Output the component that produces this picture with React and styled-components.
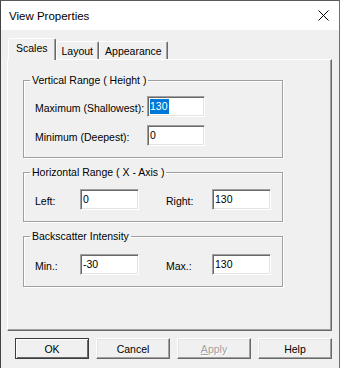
import React from 'react'
import styled, { createGlobalStyle } from 'styled-components'

const GlobalStyle = createGlobalStyle`
  html, body {
    margin: 0;
    padding: 0;
    background: #f0f0f0;
  }
  body {
    font-family: "Liberation Sans", Arial, sans-serif;
    font-size: 10.5px;
    color: #000;
  }
`;

const Window = styled.div`
  width: 340px;
  height: 368px;
  box-sizing: border-box;
  display: flex;
  flex-direction: column;
  background: #f0f0f0;
  border-left: 1px solid #434343;
  border-right: 1px solid #6e6e6e;
  border-top: 1px solid #5a5a5a;
  overflow: hidden;
`;

const TitleBar = styled.div`
  height: 29px;
  flex: none;
  display: flex;
  align-items: center;
  justify-content: space-between;
  background: #fff;
  padding: 0 10px 0 8px;
`;

const Title = styled.span`
  font-size: 11.5px;
  color: #000;
`;

const Body = styled.div`
  flex: 1;
  display: flex;
  flex-direction: column;
  padding: 8px 7px 0 6px;
`;

const TabStrip = styled.div`
  height: 21px;
  display: flex;
  align-items: flex-end;
  padding-left: 1px;
`;

const Tab = styled.div`
  position: relative;
  box-sizing: border-box;
  height: ${({ $active }) => ($active ? '22px' : '18px')};
  margin-bottom: ${({ $active }) => ($active ? '-1px' : '0')};
  z-index: ${({ $active }) => ($active ? 1 : 0)};
  padding: ${({ $active }) => ($active ? '2px 7px 0' : '2px 5px 0')};
  background: #f0f0f0;
  border-top: 1px solid #fff;
  border-left: 1px solid #fff;
  border-right: 1px solid #696969;
  box-shadow: inset -1px 0 0 #a0a0a0;
  border-radius: 2px 2px 0 0;
  line-height: 14px;
  white-space: nowrap;
`;

const Panel = styled.div`
  box-sizing: border-box;
  width: 325px;
  height: 272px;
  border-top: 1px solid #fff;
  border-left: 1px solid #fff;
  border-right: 1px solid #696969;
  border-bottom: 1px solid #696969;
  box-shadow: inset -1px -1px 0 #a0a0a0;
  padding: 14px 0 0 15px;
  display: flex;
  flex-direction: column;
  gap: 8px;
`;

const Group = styled.fieldset`
  box-sizing: border-box;
  width: 260px;
  margin: 0;
  min-width: 0;
  padding: ${({ $top }) => $top}px 0 11px 11px;
  border: 1px solid #a0a0a0;
  box-shadow: 1px 1px 0 #fff, inset 1px 1px 0 #fff;
  display: flex;
  flex-direction: column;
  gap: 8px;
`;

const Legend = styled.legend`
  margin-left: -5px;
  padding: 0 2px;
  line-height: 13px;
`;

const Row = styled.div`
  display: flex;
  align-items: center;
`;

const Label = styled.span`
  width: ${({ $w }) => $w}px;
  margin-left: ${({ $gap }) => $gap || 0}px;
  padding-top: 2px;
  flex: none;
  white-space: nowrap;
`;

const TextBox = styled.div`
  box-sizing: border-box;
  width: ${({ $w }) => $w || 59}px;
  height: 21px;
  flex: none;
  background: #fff;
  border-top: 1px solid #a0a0a0;
  border-left: 1px solid #a0a0a0;
  border-right: 1px solid #fff;
  border-bottom: 1px solid #fff;
  box-shadow: inset 1px 1px 0 #696969, inset -1px -1px 0 #e3e3e3;
  padding: 2px 2px 0 2px;
  line-height: 15px;
`;

const Selected = styled.span`
  display: inline-block;
  background: #0078d7;
  color: #fff;
  padding-right: 1px;
`;

const ButtonRow = styled.div`
  display: flex;
  justify-content: flex-end;
  gap: 7px;
  width: 325px;
  margin-top: 7px;
`;

const Button = styled.div`
  box-sizing: border-box;
  width: 74px;
  height: 21px;
  display: flex;
  align-items: center;
  justify-content: center;
  background: #f0f0f0;
  border: 1px solid;
  border-color: ${({ $default }) =>
    $default ? '#3c3c3c' : '#fff #696969 #696969 #fff'};
  box-shadow: ${({ $default }) =>
    $default
      ? 'inset 1px 1px 0 #fff, inset -1px -1px 0 #696969'
      : 'inset -1px -1px 0 #a0a0a0, inset 1px 1px 0 #e3e3e3'};
  color: ${({ $disabled }) => ($disabled ? '#a0a0a0' : '#000')};
  text-shadow: ${({ $disabled }) => ($disabled ? '1px 1px 0 #fff' : 'none')};
  padding-top: 1px;
`;

const Mnemonic = styled.span`
  text-decoration: underline;
`;

const CloseIcon = () => (
  <svg width="11" height="11" viewBox="0 0 11 11">
    <path d="M0.5 0.5 L10.5 10.5 M10.5 0.5 L0.5 10.5" stroke="#000" strokeWidth="1" fill="none" />
  </svg>
);

export default function App() {
  return (
    <>
      <GlobalStyle />
      <Window>
        <TitleBar>
          <Title>View Properties</Title>
          <CloseIcon />
        </TitleBar>
        <Body>
          <TabStrip>
            <Tab $active>Scales</Tab>
            <Tab>Layout</Tab>
            <Tab>Appearance</Tab>
          </TabStrip>
          <Panel>
            <Group $top={9}>
              <Legend>Vertical Range ( Height )</Legend>
              <Row>
                <Label $w={112}>Maximum (Shallowest):</Label>
                <TextBox $w={58}><Selected>130</Selected></TextBox>
              </Row>
              <Row>
                <Label $w={112}>Minimum (Deepest):</Label>
                <TextBox $w={58}>0</TextBox>
              </Row>
            </Group>
            <Group $top={10}>
              <Legend>Horizontal Range ( X - Axis )</Legend>
              <Row>
                <Label $w={45}>Left:</Label>
                <TextBox>0</TextBox>
                <Label $w={46} $gap={27}>Right:</Label>
                <TextBox>130</TextBox>
              </Row>
            </Group>
            <Group $top={11}>
              <Legend>Backscatter Intensity</Legend>
              <Row>
                <Label $w={45}>Min.:</Label>
                <TextBox>-30</TextBox>
                <Label $w={46} $gap={27}>Max.:</Label>
                <TextBox>130</TextBox>
              </Row>
            </Group>
          </Panel>
          <ButtonRow>
            <Button $default>OK</Button>
            <Button>Cancel</Button>
            <Button $disabled><span><Mnemonic>A</Mnemonic>pply</span></Button>
            <Button>Help</Button>
          </ButtonRow>
        </Body>
      </Window>
    </>
  );
}
